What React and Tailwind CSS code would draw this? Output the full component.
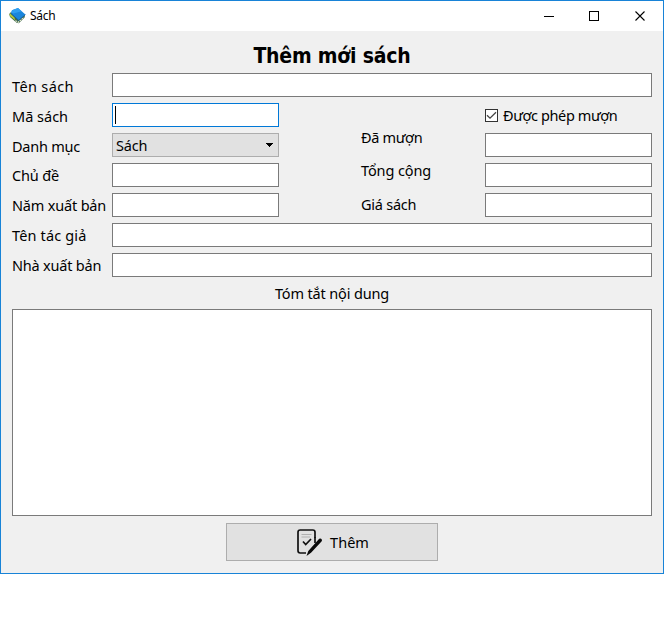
import React from "react";

const textFont = "font-['Noto_Sans','Open_Sans',sans-serif]";

function Label({ children, className = "pt-px" }) {
  return (
    <span className={`flex h-6 w-[100px] shrink-0 items-center whitespace-nowrap ${className}`}>
      {children}
    </span>
  );
}

function Field({ className = "w-[167px]" }) {
  return <div className={`h-6 shrink-0 border border-[#7a7a7a] bg-white ${className}`} />;
}

function BookIcon() {
  return (
    <svg width="17" height="16" viewBox="0 0 17 16" className="shrink-0">
      <path d="M0.2 6 L2 4 L9 10.4 L16 7 L15.6 9.6 L9.8 15.2 L7.6 14.8 L1 9 Z" fill="#3f6a4a" />
      <path d="M0.3 6.4 L1.6 5.6 L5.4 9.6 L6.4 12.6 L1.4 8.6 Z" fill="#b4c83a" />
      <path d="M6.4 12.8 L9.2 14.2 L14.6 9.6" stroke="#f2f2dc" strokeWidth="1.2" strokeDasharray="1.6 .9" fill="none" />
      <path d="M9 0 L16.4 6.6 L9.8 12.4 L2 5.6 L3 2.2 Z" fill="#1a86dc" />
      <path d="M9 0 L12.6 3.2 L4.4 5.6 L2.2 4.4 L3 2.2 Z" fill="#2f9ff0" />
      <path d="M2 5.6 L9.8 12.4 L16.4 6.6" stroke="#145797" strokeWidth="0.8" fill="none" />
    </svg>
  );
}

function NoteIcon() {
  return (
    <svg width="27" height="29" viewBox="0 0 27 29" className="shrink-0" fill="none">
      <path d="M19 10 V4.2 Q19 2 16.8 2 H4.2 Q2 2 2 4.2 V22.8 Q2 25 4.2 25 H10" stroke="#111" strokeWidth="1.7" />
      <path d="M5.5 6.5 H15.5 M5.5 9 H14" stroke="#b0b0b0" strokeWidth="1" />
      <path d="M7 13.5 L9.7 16.5 L15 11" stroke="#111" strokeWidth="1.7" />
      <path d="M23.2 10.8 Q25.7 9.8 26 12.3 Q26 13.3 24.8 14.2 L15 24.8 L10.5 28 L12.3 23 Z" fill="#090909" />
      <path d="M19 9 V15" stroke="#111" strokeWidth="1.7" />
    </svg>
  );
}

function TitleBar() {
  return (
    <div className="flex h-[30px] items-center bg-white pl-2 pb-px">
      <BookIcon />
      <span className="ml-[4px] pt-px text-[12px] leading-4 tracking-[-0.3px]">Sách</span>
      <svg width="102" height="11" viewBox="0 0 102 11" className="ml-auto mr-[17px] mt-px" fill="none" stroke="#000">
        <path d="M0 5.5 H10" shapeRendering="crispEdges" />
        <rect x="45.5" y="0.5" width="9" height="9" shapeRendering="crispEdges" />
        <path d="M91.5 0.5 L100.5 9.5 M100.5 0.5 L91.5 9.5" strokeWidth="1.1" />
      </svg>
    </div>
  );
}

export default function App() {
  return (
    <div className={`h-[630px] w-[664px] overflow-hidden bg-white text-[14.5px] leading-5 text-black ${textFont}`}>
      <div className="flex h-[574px] flex-col border border-[#1883d7] bg-[#f0f0f0]">
        <TitleBar />
        <main className="flex flex-col px-[11px]">
          <h1 className="flex h-[42px] items-center justify-center whitespace-nowrap pt-[7px] font-['DejaVu_Sans_Condensed','DejaVu_Sans',sans-serif] text-[21px] font-bold tracking-[-0.2px] [font-stretch:condensed]">
            Thêm mới sách
          </h1>
          <div className="flex flex-col gap-1.5">
            <div className="flex">
              <Label className="pt-px tracking-[0.35px]">Tên sách</Label>
              <Field className="w-[540px]" />
            </div>
            <div className="flex">
              <div className="flex w-[267px] flex-col gap-1.5">
                <div className="flex">
                  <Label>Mã sách</Label>
                  <div className="h-6 w-[167px] border border-[#0078d7] bg-white pl-0.5 pt-[2px]">
                    <div className="h-[18px] w-px bg-black" />
                  </div>
                </div>
                <div className="flex">
                  <Label className="pt-px tracking-[-0.25px]">Danh mục</Label>
                  <div className="flex h-6 w-[167px] items-center justify-between border border-[#adadad] bg-[#e1e1e1] pl-[3px] pr-[5px]">
                    <span className="tracking-[-0.2px]">Sách</span>
                    <svg width="9" height="4" viewBox="0 0 9 4" className="-mr-px" shapeRendering="crispEdges">
                      <path d="M1 0 H8 V1 H7 V2 H6 V3 H5 V4 H4 V3 H3 V2 H2 V1 H1 Z" />
                    </svg>
                  </div>
                </div>
                <div className="flex">
                  <Label className="-mt-px pt-px tracking-[-0.15px]">Chủ đề</Label>
                  <Field />
                </div>
                <div className="flex">
                  <Label className="-mt-px pt-px tracking-[-0.18px]">Năm xuất bản</Label>
                  <Field />
                </div>
              </div>
              <div className="ml-[82px] flex w-[124px] flex-col gap-[13px] whitespace-nowrap pt-[24px]">
                <span className="tracking-[-0.35px]">Đã mượn</span>
                <span className="tracking-[-0.1px]">Tổng cộng</span>
                <span className="pt-px tracking-[-0.25px]">Giá sách</span>
              </div>
              <div className="flex flex-col gap-1.5">
                <div className="flex h-6 items-center gap-[5px] whitespace-nowrap">
                  <svg width="13" height="13" viewBox="0 0 13 13" fill="none">
                    <rect x=".5" y=".5" width="12" height="12" fill="#fff" stroke="#333" />
                    <path d="M2 6.3 L5 9.2 L11 3.2" stroke="#444" strokeWidth="1.3" />
                  </svg>
                  <span className="tracking-[-0.4px]">Được phép mượn</span>
                </div>
                <Field />
                <Field />
                <Field />
              </div>
            </div>
            <div className="flex">
              <Label className="-mt-px pt-px tracking-[0.15px]">Tên tác giả</Label>
              <Field className="w-[540px]" />
            </div>
            <div className="flex">
              <Label className="-mt-px pt-px tracking-[-0.2px]">Nhà xuất bản</Label>
              <Field className="w-[540px]" />
            </div>
          </div>
          <div className="flex h-8 items-center justify-center pb-px tracking-[-0.15px]">Tóm tắt nội dung</div>
          <div className="h-[207px] border border-[#7a7a7a] bg-white" />
          <button className="mx-auto mt-[7px] flex h-[38px] w-[212px] items-center justify-center gap-[7px] border border-[#adadad] bg-[#e1e1e1] pl-px">
            <NoteIcon />
            <span>Thêm</span>
          </button>
        </main>
      </div>
    </div>
  );
}
